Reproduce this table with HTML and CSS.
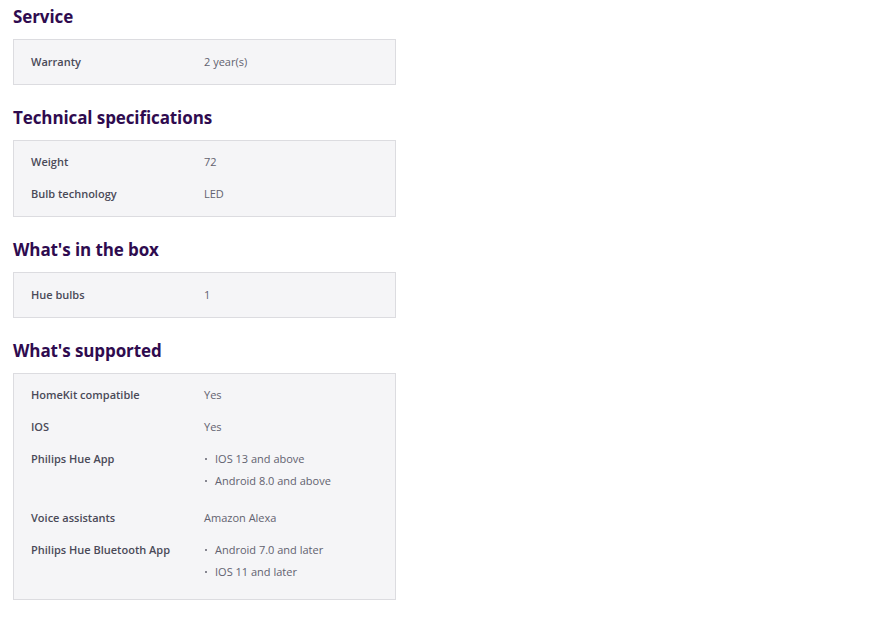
FILE: index.html
```html
<!DOCTYPE html>
<html>
<head>
<meta charset="utf-8">
<link rel="stylesheet" href="styles.css">
</head>
<body>
<div class="page">
  <section class="group">
    <h2 class="group-title">Service</h2>
    <div class="spec-box">
      <div class="row"><div class="label">Warranty</div><div class="value">2 year(s)</div></div>
    </div>
  </section>
  <section class="group">
    <h2 class="group-title">Technical specifications</h2>
    <div class="spec-box">
      <div class="row"><div class="label">Weight</div><div class="value">72</div></div>
      <div class="row"><div class="label">Bulb technology</div><div class="value">LED</div></div>
    </div>
  </section>
  <section class="group">
    <h2 class="group-title">What's in the box</h2>
    <div class="spec-box">
      <div class="row"><div class="label">Hue bulbs</div><div class="value">1</div></div>
    </div>
  </section>
  <section class="group">
    <h2 class="group-title">What's supported</h2>
    <div class="spec-box">
      <div class="row"><div class="label">HomeKit compatible</div><div class="value">Yes</div></div>
      <div class="row"><div class="label">IOS</div><div class="value">Yes</div></div>
      <div class="row"><div class="label">Philips Hue App</div>
        <ul class="value list"><li>IOS 13 and above</li><li>Android 8.0 and above</li></ul></div>
      <div class="row"><div class="label">Voice assistants</div><div class="value">Amazon Alexa</div></div>
      <div class="row"><div class="label">Philips Hue Bluetooth App</div>
        <ul class="value list"><li>Android 7.0 and later</li><li>IOS 11 and later</li></ul></div>
    </div>
  </section>
</div>
</body>
</html>
```
FILE: styles.css
```css
html, body { margin: 0; padding: 0; background: #ffffff; }
body { font-family: "Open Sans", "Noto Sans", sans-serif; }
.page { padding: 5px 0 0 13px; width: 383px; }
.group { margin-bottom: 21px; }
.group-title {
  margin: 0 0 10px 0;
  font-family: "Open Sans", "Noto Sans", sans-serif;
  font-size: 17px;
  line-height: 24px;
  font-weight: 700;
  color: #2f0b4f;
  letter-spacing: -0.1px;
}
.spec-box {
  background: #f5f5f7;
  border: 1px solid #dcdce0;
  padding: 13.5px 17px 14px 17px;
  display: flex;
  flex-direction: column;
  gap: 16px;
}
.row { display: flex; align-items: flex-start; }
.label {
  width: 173px;
  flex: none;
  font-size: 11px;
  line-height: 16px;
  font-weight: 600;
  color: #4a4a58;
}
.value {
  font-size: 11px;
  line-height: 16px;
  color: #62626f;
}
.list { list-style: none; margin: 0; padding: 0; }
.list li { margin-bottom: 5.5px; position: relative; padding-left: 11px; }
.list li::before {
  content: "";
  position: absolute;
  left: 1px;
  top: 7px;
  width: 2px;
  height: 2px;
  background: #62626f;
  border-radius: 1px;
}
```
